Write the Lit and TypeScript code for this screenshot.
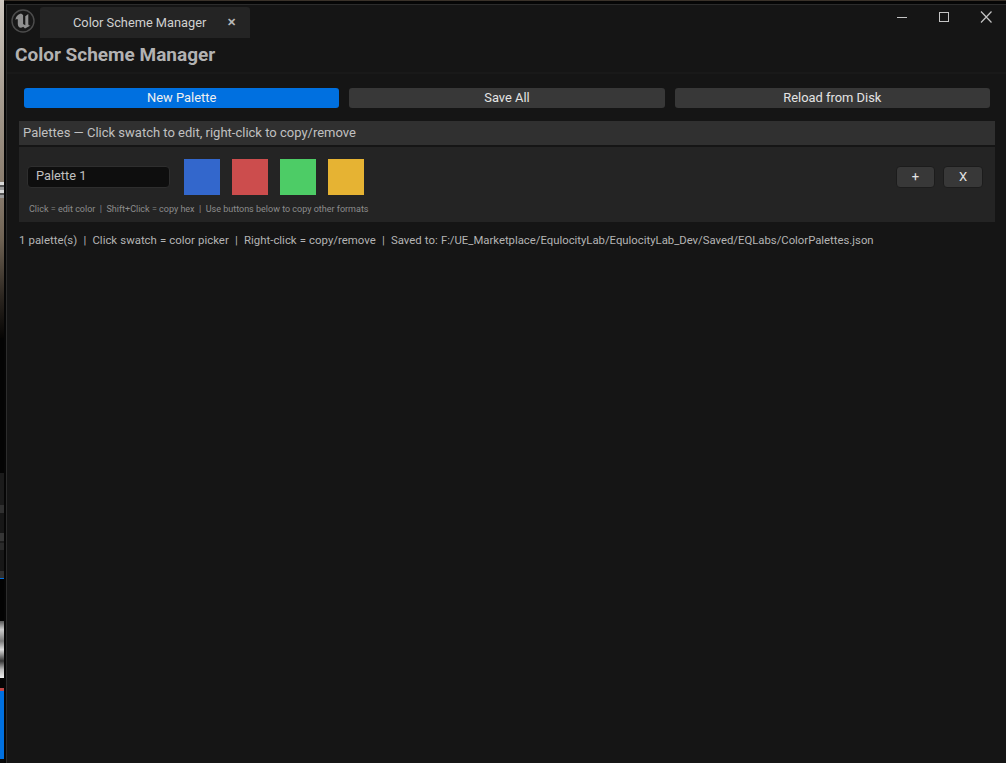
import { LitElement, html, css } from "lit";
import { customElement, property } from "lit/decorators.js";

interface Band {
  h: number;
  c: string;
}

// what shows of the desktop behind the window, top to bottom
const BANDS: Band[] = [
  { h: 182, c: "linear-gradient(#cfc8c0, #a89e92 50%, #8a7d6e)" },
  { h: 16, c: "repeating-linear-gradient(#d8d8d8 0 3px, #555 3px 5px, #9a9a9a 5px 8px)" },
  { h: 140, c: "linear-gradient(#85786a, #6e6253 30%, #2c2620 70%, #060504)" },
  { h: 135, c: "#040404" },
  { h: 32, c: "#1b1b1b" },
  { h: 8, c: "#303030" },
  { h: 20, c: "#171717" },
  { h: 8, c: "#363636" },
  { h: 2, c: "#1c1c1c" },
  { h: 7, c: "#2a2a2a" },
  { h: 21, c: "#171717" },
  { h: 7, c: "#303030" },
  { h: 1, c: "#0070e0" },
  { h: 42, c: "#030303" },
  { h: 57, c: "linear-gradient(#555, #ccc 15%, #777 35%, #ddd 50%, #333 70%, #bbb 85%, #eee)" },
  { h: 10, c: "#050505" },
  { h: 3, c: "#c04848" },
  { h: 68, c: "#0070e0" },
  { h: 4, c: "#0a0a0a" },
];

const SWATCHES = ["#3367cc", "#cc4d4d", "#4dcc66", "#e6b333"];

@customElement("color-swatch")
export class ColorSwatch extends LitElement {
  @property()
  color = "#000";

  static styles = css`
    :host {
      display: block;
      width: 36px;
      height: 36px;
    }
    div {
      width: 100%;
      height: 100%;
    }
  `;

  render() {
    return html`<div style="background:${this.color}"></div>`;
  }
}

@customElement("app-root")
export class AppRoot extends LitElement {
  static styles = css`
    :host {
      display: flex;
      height: 763px;
      overflow: hidden;
      font-family: Roboto, "Liberation Sans", sans-serif;
      background: #060606;
      color: #c0c0c0;
    }
    .desktop {
      width: 4px;
      flex: none;
      display: flex;
      flex-direction: column;
    }
    .window {
      flex: 1;
      min-width: 0;
      display: flex;
      flex-direction: column;
      padding-left: 2px;
    }
    .topedge {
      height: 4px;
      flex: none;
      box-sizing: border-box;
      margin-left: -2px;
      border-top: 1px solid #3a322a;
      background: #060606;
    }
    .frame {
      flex: 1;
      display: flex;
      flex-direction: column;
      background: #151515;
      border-left: 1px solid #2c2c2c;
    }
    .titlebar {
      height: 34px;
      flex: none;
      display: flex;
      align-items: flex-end;
      padding-left: 4px;
      box-shadow: inset 0 1px 0 #2c2c2c;
    }
    .logo {
      width: 24px;
      height: 24px;
      align-self: flex-start;
      margin-top: 5px;
      flex: none;
    }
    .tab {
      width: 210px;
      height: 31px;
      margin-left: 5px;
      flex: none;
      box-sizing: border-box;
      background: #242424;
      border-radius: 3px 3px 0 0;
      display: flex;
      align-items: center;
      padding-left: 33px;
      font-size: 12.8px;
      color: #d0d0d0;
    }
    .tab .close {
      margin-left: 21px;
      font-size: 11px;
      font-weight: 700;
      color: #b8b8b8;
    }
    .winbtns {
      margin-left: auto;
      align-self: flex-start;
      display: flex;
      align-items: center;
      height: 26px;
      gap: 26px;
      padding-right: 12px;
    }
    .winbtns svg {
      display: block;
      width: 16px;
      height: 16px;
      stroke: #c4c4c4;
      fill: none;
    }
    h1 {
      margin: 0;
      height: 36px;
      flex: none;
      box-sizing: border-box;
      padding: 6px 0 0 8px;
      font-size: 19px;
      line-height: 22px;
      font-weight: 700;
      color: #b2b2b2;
      border-bottom: 2px solid #191919;
    }
    .content {
      padding: 14px 11px 0 12px;
      display: flex;
      flex-direction: column;
    }
    .actions {
      display: grid;
      grid-template-columns: repeat(3, 1fr);
      gap: 10px;
      padding: 0 5px;
      height: 20px;
    }
    .btn {
      border-radius: 3px;
      background: #383838;
      color: #e4e4e4;
      font-size: 12.9px;
      line-height: 20px;
      text-align: center;
    }
    .btn.primary {
      background: #0070e0;
      color: #f0f0f0;
    }
    .panel-head {
      margin-top: 13px;
      height: 24px;
      box-sizing: border-box;
      padding-left: 4px;
      background: #303030;
      font-size: 13px;
      line-height: 24px;
      color: #c0c0c0;
    }
    .panel {
      margin-top: 2px;
      height: 75px;
      box-sizing: border-box;
      padding: 12px 12px 0 8px;
      background: #242424;
    }
    .row {
      display: flex;
      align-items: center;
      height: 36px;
    }
    .name {
      width: 143px;
      height: 22px;
      box-sizing: border-box;
      border: 1px solid #2e2e2e;
      border-radius: 4px;
      background: #0e0e0e;
      padding-left: 8px;
      font-size: 12.8px;
      line-height: 18px;
      color: #c0c0c0;
      margin-right: 14px;
    }
    .swatches {
      display: flex;
      gap: 12px;
    }
    .small {
      width: 40px;
      height: 22px;
      box-sizing: border-box;
      border: 1px solid #1c1c1c;
      border-radius: 4px;
      background: #383838;
      color: #e4e4e4;
      font-size: 13px;
      line-height: 20px;
      text-align: center;
    }
    .small.add {
      width: 39px;
      margin-left: auto;
      margin-right: 8px;
    }
    .hint {
      margin-top: 8px;
      padding-left: 2px;
      font-size: 9px;
      line-height: 12px;
      color: #8c8c8c;
      white-space: pre;
    }
    .status {
      margin-top: 12px;
      font-size: 11.4px;
      line-height: 13px;
      word-spacing: 0.3px;
      color: #b4b4b4;
      white-space: pre;
    }
    .status .path {
      font-size: 11.32px;
    }
  `;

  render() {
    return html`
      <div class="desktop">
        ${BANDS.map((b) => html`<div style="flex:none;height:${b.h}px;background:${b.c}"></div>`)}
      </div>
      <div class="window">
        <div class="topedge"></div>
        <div class="frame">
          <div class="titlebar">
            <svg class="logo" viewBox="0 0 24 24">
              <circle cx="12" cy="12" r="11" fill="#181818" stroke="#4c4c4c" stroke-width="1.4"></circle>
              <path
                d="M10 4.500C6.500 5.500 4.500 8 4.500 11c1.200-1.300 2.300-1.300 2.300 0v4c0 3.600 3 4.600 5.400 2.800l1.800 1.700 5.500-3c-1.300.3-2.200-.3-2.200-1.800V5l-3 2.300v9l-2.200-1.300V6z"
                fill="#909090"
              ></path>
            </svg>
            <div class="tab">Color Scheme Manager<span class="close">✕</span></div>
            <div class="winbtns">
              <svg viewBox="0 0 16 16"><path d="M3 8.500h10"></path></svg>
              <svg viewBox="0 0 16 16"><rect x="3.500" y="3.500" width="9" height="9"></rect></svg>
              <svg viewBox="0 0 16 16"><path d="M3 2.500l10.500 11M13.500 2.500L3 13.500" stroke-width="1.200"></path></svg>
            </div>
          </div>
          <h1>Color Scheme Manager</h1>
          <div class="content">
            <div class="actions">
              <div class="btn primary">New Palette</div>
              <div class="btn">Save All</div>
              <div class="btn">Reload from Disk</div>
            </div>
            <div class="panel-head">Palettes — Click swatch to edit, right-click to copy/remove</div>
            <div class="panel">
              <div class="row">
                <div class="name">Palette 1</div>
                <div class="swatches">
                  ${SWATCHES.map((c) => html`<color-swatch color=${c}></color-swatch>`)}
                </div>
                <div class="small add">+</div>
                <div class="small">X</div>
              </div>
              <div class="hint">Click = edit color  |  Shift+Click = copy hex  |  Use buttons below to copy other formats</div>
            </div>
            <div class="status">1 palette(s)  |  Click swatch = color picker  |  Right-click = copy/remove  |  Saved to: <span class="path">F:/UE_Marketplace/EqulocityLab/EqulocityLab_Dev/Saved/EQLabs/ColorPalettes.json</span></div>
          </div>
        </div>
      </div>
    `;
  }
}
